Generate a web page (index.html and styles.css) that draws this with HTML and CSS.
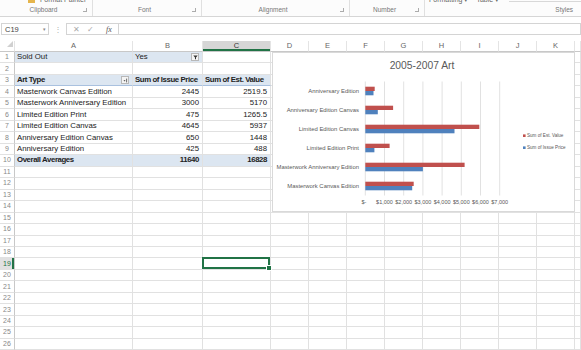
FILE: index.html
```html
<!DOCTYPE html>
<html lang="en">
<head>
    <meta charset="UTF-8">
    <meta content="width=device-width, initial-scale=1.0" name="viewport">
    <title>2005-2007 Art - Excel</title>
    <link rel="stylesheet" href="styles.css">
</head>
<body>
<div class="ribbon">
    <div class="group g-clipboard">
        <div class="group-top"><span class="brush"></span>Format Painter</div>
        <div class="group-label"><span class="label">Clipboard</span><span class="launcher"></span></div>
    </div>
    <div class="group g-font">
        <div class="group-top"></div>
        <div class="group-label"><span class="label">Font</span><span class="launcher"></span></div>
    </div>
    <div class="group g-align">
        <div class="group-top"></div>
        <div class="group-label"><span class="label">Alignment</span><span class="launcher"></span></div>
    </div>
    <div class="group g-number">
        <div class="group-top"></div>
        <div class="group-label"><span class="label">Number</span><span class="launcher"></span></div>
    </div>
    <div class="group g-styles">
        <div class="group-top"><span>Formatting ▾</span><span>Table ▾</span><span class="gallery-edge"></span></div>
        <div class="group-label styles-label"><span>Styles</span></div>
    </div>
</div>

<div class="formula-bar">
    <div class="name-box"><span>C19</span><span class="nb-arrow">▾</span></div>
    <span class="grip">⋮</span>
    <div class="fx-box">
        <span class="fx-btn">✕</span>
        <span class="fx-btn">✓</span>
        <span class="fx-label">fx</span>
    </div>
    <div class="formula-input"></div>
</div>

<div class="sheet">
    <table class="grid">
        <colgroup>
            <col class="c-head"><col class="c-a"><col class="c-b"><col class="c-c">
            <col class="c-n"><col class="c-n"><col class="c-n"><col class="c-n">
            <col class="c-n"><col class="c-n"><col class="c-n"><col class="c-n">
            <col class="c-l">
        </colgroup>
        <thead>
        <tr class="col-heads">
            <th class="corner"><span class="corner-tri"></span></th>
            <th>A</th><th>B</th><th class="active">C</th><th>D</th><th>E</th><th>F</th>
            <th>G</th><th>H</th><th>I</th><th>J</th><th>K</th><th></th>
        </tr>
        </thead>
        <tbody>
        <tr><th>1</th><td class="pv-page">Sold Out</td><td class="pv-page"><span class="cell-split">Yes<span class="drop-btn"><svg width="5" height="5" viewBox="0 0 5 5"><path d="M0.3 0.6h4.4L3 2.4v2.1L2 3.9V2.4z" fill="#333"/></svg></span></span></td><td></td><td></td><td></td><td></td><td></td><td></td><td></td><td></td><td></td><td></td></tr>
        <tr><th>2</th><td></td><td></td><td></td><td></td><td></td><td></td><td></td><td></td><td></td><td></td><td></td><td></td></tr>
        <tr class="pv-head"><th>3</th><td><span class="cell-split">Art Type<span class="drop-btn"><svg width="5" height="5" viewBox="0 0 5 5"><path d="M0.5 2.2h2L1.5 3.6z" fill="#333"/><path d="M3.6 0.6v3.8" stroke="#333" stroke-width="0.7"/></svg></span></span></td><td>Sum of Issue Price</td><td>Sum of Est. Value</td><td></td><td></td><td></td><td></td><td></td><td></td><td></td><td></td><td></td></tr>
        <tr><th>4</th><td>Masterwork Canvas Edition</td><td class="num">2445</td><td class="num">2519.5</td><td></td><td></td><td></td><td></td><td></td><td></td><td></td><td></td><td></td></tr>
        <tr><th>5</th><td>Masterwork Anniversary Edition</td><td class="num">3000</td><td class="num">5170</td><td></td><td></td><td></td><td></td><td></td><td></td><td></td><td></td><td></td></tr>
        <tr><th>6</th><td>Limited Edition Print</td><td class="num">475</td><td class="num">1265.5</td><td></td><td></td><td></td><td></td><td></td><td></td><td></td><td></td><td></td></tr>
        <tr><th>7</th><td>Limited Edition Canvas</td><td class="num">4645</td><td class="num">5937</td><td></td><td></td><td></td><td></td><td></td><td></td><td></td><td></td><td></td></tr>
        <tr><th>8</th><td>Anniversary Edition Canvas</td><td class="num">650</td><td class="num">1448</td><td></td><td></td><td></td><td></td><td></td><td></td><td></td><td></td><td></td></tr>
        <tr><th>9</th><td>Anniversary Edition</td><td class="num">425</td><td class="num">488</td><td></td><td></td><td></td><td></td><td></td><td></td><td></td><td></td><td></td></tr>
        <tr class="pv-total"><th>10</th><td>Overall Averages</td><td class="num">11640</td><td class="num">16828</td><td></td><td></td><td></td><td></td><td></td><td></td><td></td><td></td><td></td></tr>
        <tr><th>11</th><td></td><td></td><td></td><td></td><td></td><td></td><td></td><td></td><td></td><td></td><td></td><td></td></tr>
        <tr><th>12</th><td></td><td></td><td></td><td></td><td></td><td></td><td></td><td></td><td></td><td></td><td></td><td></td></tr>
        <tr><th>13</th><td></td><td></td><td></td><td></td><td></td><td></td><td></td><td></td><td></td><td></td><td></td><td></td></tr>
        <tr><th>14</th><td></td><td></td><td></td><td></td><td></td><td></td><td></td><td></td><td></td><td></td><td></td><td></td></tr>
        <tr><th>15</th><td></td><td></td><td></td><td></td><td></td><td></td><td></td><td></td><td></td><td></td><td></td><td></td></tr>
        <tr><th>16</th><td></td><td></td><td></td><td></td><td></td><td></td><td></td><td></td><td></td><td></td><td></td><td></td></tr>
        <tr><th>17</th><td></td><td></td><td></td><td></td><td></td><td></td><td></td><td></td><td></td><td></td><td></td><td></td></tr>
        <tr><th>18</th><td></td><td></td><td></td><td></td><td></td><td></td><td></td><td></td><td></td><td></td><td></td><td></td></tr>
        <tr><th class="active">19</th><td></td><td></td><td class="selected"></td><td></td><td></td><td></td><td></td><td></td><td></td><td></td><td></td><td></td></tr>
        <tr><th>20</th><td></td><td></td><td></td><td></td><td></td><td></td><td></td><td></td><td></td><td></td><td></td><td></td></tr>
        <tr><th>21</th><td></td><td></td><td></td><td></td><td></td><td></td><td></td><td></td><td></td><td></td><td></td><td></td></tr>
        <tr><th>22</th><td></td><td></td><td></td><td></td><td></td><td></td><td></td><td></td><td></td><td></td><td></td><td></td></tr>
        <tr><th>23</th><td></td><td></td><td></td><td></td><td></td><td></td><td></td><td></td><td></td><td></td><td></td><td></td></tr>
        <tr><th>24</th><td></td><td></td><td></td><td></td><td></td><td></td><td></td><td></td><td></td><td></td><td></td><td></td></tr>
        <tr><th>25</th><td></td><td></td><td></td><td></td><td></td><td></td><td></td><td></td><td></td><td></td><td></td><td></td></tr>
        <tr><th>26</th><td></td><td></td><td></td><td></td><td></td><td></td><td></td><td></td><td></td><td></td><td></td><td></td></tr>
        </tbody>
    </table>

    <!-- chart floats over columns D:K, rows 1-14 -->
    <div class="chart">
        <svg width="303" height="160" viewBox="0 0 303 160">
            <rect class="chart-frame" x="0.5" y="0.5" width="302" height="159"/>
            <text class="chart-title" x="150" y="16.6">2005-2007 Art</text>

            <g class="gridlines">
                <line x1="93.3" y1="29.5" x2="93.3" y2="143.5"/>
                <line x1="112.5" y1="29.5" x2="112.5" y2="143.5"/>
                <line x1="131.7" y1="29.5" x2="131.7" y2="143.5"/>
                <line x1="150.9" y1="29.5" x2="150.9" y2="143.5"/>
                <line x1="170.1" y1="29.5" x2="170.1" y2="143.5"/>
                <line x1="189.3" y1="29.5" x2="189.3" y2="143.5"/>
                <line x1="208.5" y1="29.5" x2="208.5" y2="143.5"/>
                <line x1="227.7" y1="29.5" x2="227.7" y2="143.5"/>
            </g>

            <g class="cat-labels">
                <text x="87" y="41">Anniversary Edition</text>
                <text x="87" y="60">Anniversary Edition Canvas</text>
                <text x="87" y="79">Limited Edition Canvas</text>
                <text x="87" y="98">Limited Edition Print</text>
                <text x="87" y="117">Masterwork Anniversary Edition</text>
                <text x="87" y="136">Masterwork Canvas Edition</text>
            </g>

            <g class="bars-est">
                <rect x="93.3" y="34.7" width="9.4" height="4.3"/>
                <rect x="93.3" y="53.7" width="27.8" height="4.3"/>
                <rect x="93.3" y="72.7" width="114" height="4.3"/>
                <rect x="93.3" y="91.7" width="24.3" height="4.3"/>
                <rect x="93.3" y="110.7" width="99.3" height="4.3"/>
                <rect x="93.3" y="129.7" width="48.4" height="4.3"/>
            </g>
            <g class="bars-issue">
                <rect x="93.3" y="39" width="8.2" height="4.3"/>
                <rect x="93.3" y="58" width="12.5" height="4.3"/>
                <rect x="93.3" y="77" width="89.2" height="4.3"/>
                <rect x="93.3" y="96" width="9.1" height="4.3"/>
                <rect x="93.3" y="115" width="57.6" height="4.3"/>
                <rect x="93.3" y="134" width="46.9" height="4.3"/>
            </g>

            <g class="axis-labels">
                <text x="92" y="152">$-</text>
                <text x="112.5" y="152">$1,000</text>
                <text x="131.7" y="152">$2,000</text>
                <text x="150.9" y="152">$3,000</text>
                <text x="170.1" y="152">$4,000</text>
                <text x="189.3" y="152">$5,000</text>
                <text x="208.5" y="152">$6,000</text>
                <text x="227.7" y="152">$7,000</text>
            </g>

            <g class="legend">
                <rect class="est" x="251" y="82.4" width="2.6" height="2.6"/>
                <text x="255" y="85.3">Sum of Est. Value</text>
                <rect class="issue" x="251" y="94.4" width="2.6" height="2.6"/>
                <text x="255" y="97.3">Sum of Issue Price</text>
            </g>
        </svg>
    </div>
</div>
</body>
</html>
```

FILE: styles.css
```css
* {
    box-sizing: border-box;
}

body {
    margin: 0;
    width: 581px;
    height: 350px;
    overflow: hidden;
    background-color: #fff;
    font-family: 'Liberation Sans', Arial, sans-serif;
    color: #222;
}

/* ribbon (cropped at the top) */
.ribbon {
    height: 17px;
    display: grid;
    grid-template-columns: 93px 109px 148px 75px 1fr;
    background-color: #fcfcfc;
    border-bottom: 1px solid #d6d6d6;
    overflow: hidden;
}

.group {
    display: flex;
    flex-direction: column;
    justify-content: space-between;
    border-right: 1px solid #e0e0e0;
}

.g-styles {
    border-right: none;
}

.group-top {
    height: 4px;
    display: flex;
    align-items: flex-end;
    font-size: 7px;
    line-height: 8px;
    color: #666;
    white-space: nowrap;
}

.g-clipboard .group-top {
    padding-left: 28px;
}

.brush {
    width: 7px;
    height: 3px;
    margin-right: 5px;
    background-color: #e5b54c;
    align-self: flex-start;
}

.g-styles .group-top {
    padding-left: 4px;
    gap: 8px;
}

.gallery-edge {
    flex: 1;
    align-self: flex-start;
    height: 2px;
    border-bottom: 1px solid #d8d8d8;
    margin-left: 2px;
}

.group-label {
    height: 11px;
    display: flex;
    align-items: center;
    padding: 0 5px 2px 4px;
    font-size: 6.5px;
    color: #777;
}

.group-label .label {
    flex: 1;
    text-align: center;
}

.styles-label {
    justify-content: flex-end;
    padding-right: 8px;
}

.launcher {
    width: 4px;
    height: 4px;
    border-right: 1px solid #999;
    border-bottom: 1px solid #999;
    opacity: 0.8;
}

/* formula bar */
.formula-bar {
    height: 24px;
    display: flex;
    align-items: center;
    padding-left: 1px;
}

.name-box {
    width: 48px;
    height: 12px;
    border: 1px solid #d4d4d4;
    display: flex;
    align-items: center;
    justify-content: space-between;
    padding: 0 2px 0 3px;
    font-size: 7.5px;
    color: #444;
}

.nb-arrow {
    font-size: 5px;
    color: #888;
}

.grip {
    width: 17px;
    text-align: center;
    font-size: 8px;
    color: #b0b0b0;
}

.fx-box {
    width: 52px;
    height: 12px;
    border: 1px solid #d4d4d4;
    border-right: none;
    display: flex;
    align-items: center;
    padding-left: 6px;
    gap: 7px;
    font-size: 8px;
    color: #aaa;
}

.fx-label {
    margin-left: 5px;
    font-family: 'Liberation Serif', serif;
    font-style: italic;
    color: #555;
}

.formula-input {
    flex: 1;
    height: 12px;
    border: 1px solid #d4d4d4;
}

/* sheet grid */
.sheet {
    position: relative;
}

.grid {
    width: 581px;
    table-layout: fixed;
    border-collapse: separate;
    border-spacing: 0;
}

.c-head { width: 15px; }
.c-a { width: 118px; }
.c-b { width: 70px; }
.c-c { width: 68px; }
.c-n { width: 38px; }
.c-l { width: 6px; }

.grid th,
.grid td {
    padding: 0;
    border-right: 1px solid #e1e1e1;
    border-bottom: 1px solid #e1e1e1;
    white-space: nowrap;
    overflow: hidden;
    line-height: 10px;
}

.col-heads {
    height: 10.5px;
}

.col-heads th {
    font-weight: normal;
    font-size: 7.5px;
    color: #666;
    text-align: center;
    border-bottom-color: #c8c8c8;
    border-right-color: #e4e4e4;
}

.corner {
    text-align: right !important;
    vertical-align: bottom;
}

.corner-tri {
    display: inline-block;
    width: 0;
    height: 0;
    margin: 0 1px 1px 0;
    border-left: 6px solid transparent;
    border-bottom: 6px solid #d0d0d0;
}

.col-heads th.active {
    background-color: #d6d6d6;
    color: #333;
    box-shadow: inset 0 -2px #217346;
}

.grid tbody tr {
    height: 11.47px;
}

.grid tbody th {
    font-weight: normal;
    font-size: 7px;
    color: #888;
    text-align: center;
    border-right-color: #c8c8c8;
}

.grid tbody th.active {
    background-color: #e1e1e1;
    color: #217346;
    box-shadow: inset -2px 0 #217346;
}

.grid td {
    font-size: 7.8px;
    padding: 0 3px 0 2px;
}

.num {
    text-align: right;
}

.cell-split {
    display: flex;
    align-items: center;
    justify-content: space-between;
}

.drop-btn {
    width: 8px;
    height: 8px;
    display: flex;
    align-items: center;
    justify-content: center;
    background-color: #f4f4f4;
    border: 1px solid #b8b8b8;
}

/* pivot table styling */
.pv-page,
.pv-head td:nth-of-type(-n+3),
.pv-total td:nth-of-type(-n+3) {
    background-color: #dce6f1;
}

.pv-head td:nth-of-type(-n+3) {
    font-weight: bold;
    letter-spacing: -0.4px;
    border-bottom-color: #a9c1df;
}

.pv-total td:nth-of-type(-n+3) {
    font-weight: bold;
    letter-spacing: -0.4px;
}

.selected {
    position: relative;
    overflow: visible !important;
}

.selected::before {
    content: '';
    position: absolute;
    left: -1px;
    top: -1px;
    right: 0;
    bottom: 0;
    border: 2px solid #217346;
}

.selected::after {
    content: '';
    position: absolute;
    right: -2px;
    bottom: -2px;
    width: 4px;
    height: 4px;
    background-color: #217346;
    border: 1px solid #fff;
}

/* chart */
.chart {
    position: absolute;
    left: 272px;
    top: 11px;
    width: 303px;
    height: 160px;
    background-color: #fff;
}

.chart svg {
    display: block;
    font-family: 'Liberation Sans', Arial, sans-serif;
}

.chart-frame {
    fill: #fff;
    stroke: #d9d9d9;
    stroke-width: 1;
}

.chart-title {
    font-size: 10.3px;
    fill: #595959;
    text-anchor: middle;
}

.gridlines line {
    stroke: #d9d9d9;
    stroke-width: 0.8;
}

.cat-labels text {
    font-size: 5.9px;
    fill: #595959;
    text-anchor: end;
}

.bars-est rect,
.legend .est {
    fill: #c0504d;
}

.bars-issue rect,
.legend .issue {
    fill: #4f81bd;
}

.axis-labels text {
    font-size: 5.5px;
    fill: #595959;
    text-anchor: middle;
}

.legend text {
    font-size: 4.6px;
    fill: #595959;
}
```
